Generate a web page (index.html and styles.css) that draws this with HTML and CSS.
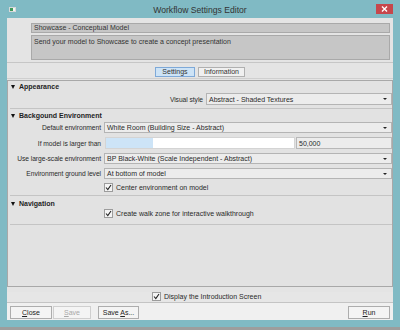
FILE: index.html
```html
<!DOCTYPE html>
<html>
<head>
<meta charset="utf-8">
<link rel="stylesheet" href="styles.css">
</head>
<body>
<div class="window">
  <div class="titlebar">
    <span class="app-icon"><span class="app-icon-dot"></span></span>
    <span class="title">Workflow Settings Editor</span>
    <span class="close-btn">
      <svg width="7" height="6" viewBox="0 0 7 6"><path d="M1 0.5 L6 5.5 M6 0.5 L1 5.5" stroke="#fff" stroke-width="1.4"/></svg>
    </span>
  </div>
  <div class="content">
    <div class="header">
      <div class="name-field">Showcase - Conceptual Model</div>
      <div class="desc-field">Send your model to Showcase to create a concept presentation</div>
    </div>
    <div class="tabs">
      <div class="tab active">Settings</div>
      <div class="tab">Information</div>
    </div>
    <div class="panel">
      <section class="section sec-appearance">
        <div class="section-head"><span class="tri"></span>Appearance</div>
        <div class="row row-wide">
          <span class="label">Visual style</span>
          <div class="select">Abstract - Shaded Textures<span class="arrow"></span></div>
        </div>
      </section>
      <section class="section sec-env">
        <div class="section-head"><span class="tri"></span>Backgound Environment</div>
        <div class="row">
          <span class="label">Default environment</span>
          <div class="select">White Room (Building Size - Abstract)<span class="arrow"></span></div>
        </div>
        <div class="row row-slider">
          <span class="label">If model is larger than</span>
          <div class="slider-wrap">
            <div class="slider"><div class="slider-fill" style="width:25%"></div></div>
            <div class="num-field">50,000</div>
          </div>
        </div>
        <div class="row">
          <span class="label">Use large-scale environment</span>
          <div class="select">BP Black-White (Scale Independent - Abstract)<span class="arrow"></span></div>
        </div>
        <div class="row">
          <span class="label">Environment ground level</span>
          <div class="select">At bottom of model<span class="arrow"></span></div>
        </div>
        <div class="row row-check">
          <span class="label"></span>
          <div class="check-line"><span class="checkbox"><svg width="7" height="7" viewBox="0 0 7 7"><path d="M1 3.5 L2.8 5.5 L6 1" stroke="#222" stroke-width="1.1" fill="none"/></svg></span>Center environment on model</div>
        </div>
      </section>
      <section class="section sec-nav">
        <div class="section-head"><span class="tri"></span>Navigation</div>
        <div class="row row-check row-check-nav">
          <span class="label"></span>
          <div class="check-line"><span class="checkbox"><svg width="7" height="7" viewBox="0 0 7 7"><path d="M1 3.5 L2.8 5.5 L6 1" stroke="#222" stroke-width="1.1" fill="none"/></svg></span>Create walk zone for interactive walkthrough</div>
        </div>
      </section>
    </div>
    <div class="footer-check">
      <div class="check-line"><span class="checkbox"><svg width="7" height="7" viewBox="0 0 7 7"><path d="M1 3.5 L2.8 5.5 L6 1" stroke="#222" stroke-width="1.1" fill="none"/></svg></span>Display the Introduction Screen</div>
    </div>
    <div class="buttons">
      <div class="btn btn-close"><u>C</u>lose</div>
      <div class="btn btn-save disabled"><u>S</u>ave</div>
      <div class="btn btn-saveas">Save <u>A</u>s...</div>
      <div class="spacer"></div>
      <div class="btn btn-run"><u>R</u>un</div>
    </div>
  </div>
</div>
</body>
</html>
```
FILE: styles.css
```css
* { box-sizing: border-box; }
html, body { margin: 0; padding: 0; }
body {
  width: 400px;
  height: 330px;
  background: #9d9d9d;
  font-family: "Liberation Sans", Arial, sans-serif;
  font-size: 7px;
  color: #222;
  overflow: hidden;
}
.window {
  width: 400px;
  height: 327px;
  background: #80bac4;
  padding: 0 7px 7px 7px;
  display: flex;
  flex-direction: column;
}
.titlebar {
  height: 18px;
  position: relative;
  display: flex;
  align-items: center;
  justify-content: center;
}
.app-icon {
  position: absolute;
  left: 2px;
  top: 7px;
  width: 7px;
  height: 5px;
  background: #f4f4f4;
  border: 1px solid #d8d8d8;
}
.app-icon-dot {
  position: absolute;
  left: 0;
  top: 0;
  width: 3px;
  height: 3px;
  background: #3f9a5a;
}
.title {
  font-size: 8.6px;
  color: #333;
  margin-top: 2px;
}
.close-btn {
  position: absolute;
  right: 0;
  top: 4px;
  width: 17px;
  height: 10px;
  background: #c6474c;
  display: flex;
  align-items: center;
  justify-content: center;
}
.content {
  flex: 1;
  background: #e4e4e4;
  display: flex;
  flex-direction: column;
}
.header {
  padding: 5px 3px 0 24px;
  border-bottom: 1px solid #c6c6c6;
  padding-bottom: 2px;
}
.name-field {
  height: 10px;
  line-height: 8px;
  background: #c6c6c6;
  border: 1px solid #a9a9a9;
  padding-left: 2px;
  color: #333;
}
.desc-field {
  height: 25px;
  margin-top: 2px;
  background: #c6c6c6;
  border: 1px solid #a9a9a9;
  padding: 2px 0 0 2px;
  color: #333;
}
.tabs {
  display: flex;
  justify-content: center;
  gap: 3px;
  padding: 4px 0 1px 0;
  border-bottom: 1px solid #cfcfcf;
}
.tab {
  height: 10px;
  line-height: 8px;
  padding: 0 5px;
  border: 1px solid #b0b0b0;
  background: #f0f0f0;
  color: #333;
}
.tab.active {
  width: 40px;
  text-align: center;
  background: #cde3f6;
  border-color: #7ea9d8;
}
.panel {
  margin-top: 1px;
  flex: 1;
  border: 1px solid #a8a8a8;
  background: #e2e2e2;
  display: flex;
  flex-direction: column;
}
.section {
  margin-left: 2px;
  border-bottom: 1px solid #c4c4c4;
}
.section-head {
  height: 9px;
  line-height: 9px;
  font-weight: bold;
  display: flex;
  align-items: center;
  color: #1e1e1e;
}
.tri {
  width: 0;
  height: 0;
  border-left: 2.5px solid transparent;
  border-right: 2.5px solid transparent;
  border-top: 4px solid #111;
  margin: 0 4px 0 1px;
}
.sec-appearance { padding: 1px 0 3px 0; }
.sec-env { margin-top: 2px; padding-bottom: 3px; }
.sec-nav { margin-top: 3px; padding-bottom: 6px; }
.row {
  display: grid;
  grid-template-columns: 91px 1fr;
  column-gap: 3px;
  margin-top: 4px;
  height: 11px;
  align-items: center;
}
.sec-env .section-head + .row { margin-top: 2px; }
.row-wide {
  grid-template-columns: 193px 1fr;
  margin-top: 2px;
  height: 12px;
}
.row-slider { height: 12px; }
.row-check { height: 9px; }
.row-check-nav { margin-top: 1px; }
.label {
  text-align: right;
  color: #2a2a2a;
  white-space: nowrap;
  font-size: 6.7px;
  letter-spacing: -0.05px;
}
.select {
  height: 100%;
  border: 1px solid #b4b4b4;
  background: #ececec;
  padding-left: 2px;
  display: flex;
  align-items: center;
  position: relative;
  color: #2a2a2a;
  white-space: nowrap;
}
.arrow {
  position: absolute;
  right: 4px;
  top: 4px;
  width: 0;
  height: 0;
  border-left: 2px solid transparent;
  border-right: 2px solid transparent;
  border-top: 2.5px solid #222;
}
.slider-wrap {
  display: flex;
  height: 100%;
  gap: 1px;
  padding-left: 1px;
}
.slider {
  flex: 1;
  background: #fff;
  border: 1px solid #d4d4d4;
  display: flex;
}
.slider-fill {
  background: #cde4f7;
  height: 100%;
}
.num-field {
  width: 96px;
  border: 1px solid #b8b8b8;
  background: #ececec;
  padding-left: 2px;
  display: flex;
  align-items: center;
  color: #2a2a2a;
}
.check-line {
  display: flex;
  align-items: center;
  color: #2a2a2a;
  white-space: nowrap;
}
.checkbox {
  width: 9px;
  height: 9px;
  border: 1px solid #9c9c9c;
  background: #f4f4f4;
  margin-right: 3px;
  display: flex;
  align-items: center;
  justify-content: center;
}
.footer-check {
  margin-top: 5px;
  display: flex;
  padding-left: 145px;
  padding-bottom: 1px;
  border-bottom: 1px solid #c4c4c4;
  background: #e6e6e6;
}
.buttons {
  display: flex;
  gap: 1px;
  padding: 3px 3px 1px 3px;
  background: #f0f0f0;
  flex: none;
}
.btn {
  height: 13px;
  line-height: 11px;
  border: 1px solid #adadad;
  background: #f4f4f4;
  text-align: center;
  color: #222;
}
.btn u { text-decoration: underline; }
.btn-close { width: 42px; }
.btn-save { width: 38px; }
.btn-saveas { width: 41px; margin-left: 6px; }
.btn-run { width: 42px; margin-right: 0; }
.btn.disabled { color: #a8a8a8; border-color: #cfcfcf; }
.spacer { flex: 1; }
```
